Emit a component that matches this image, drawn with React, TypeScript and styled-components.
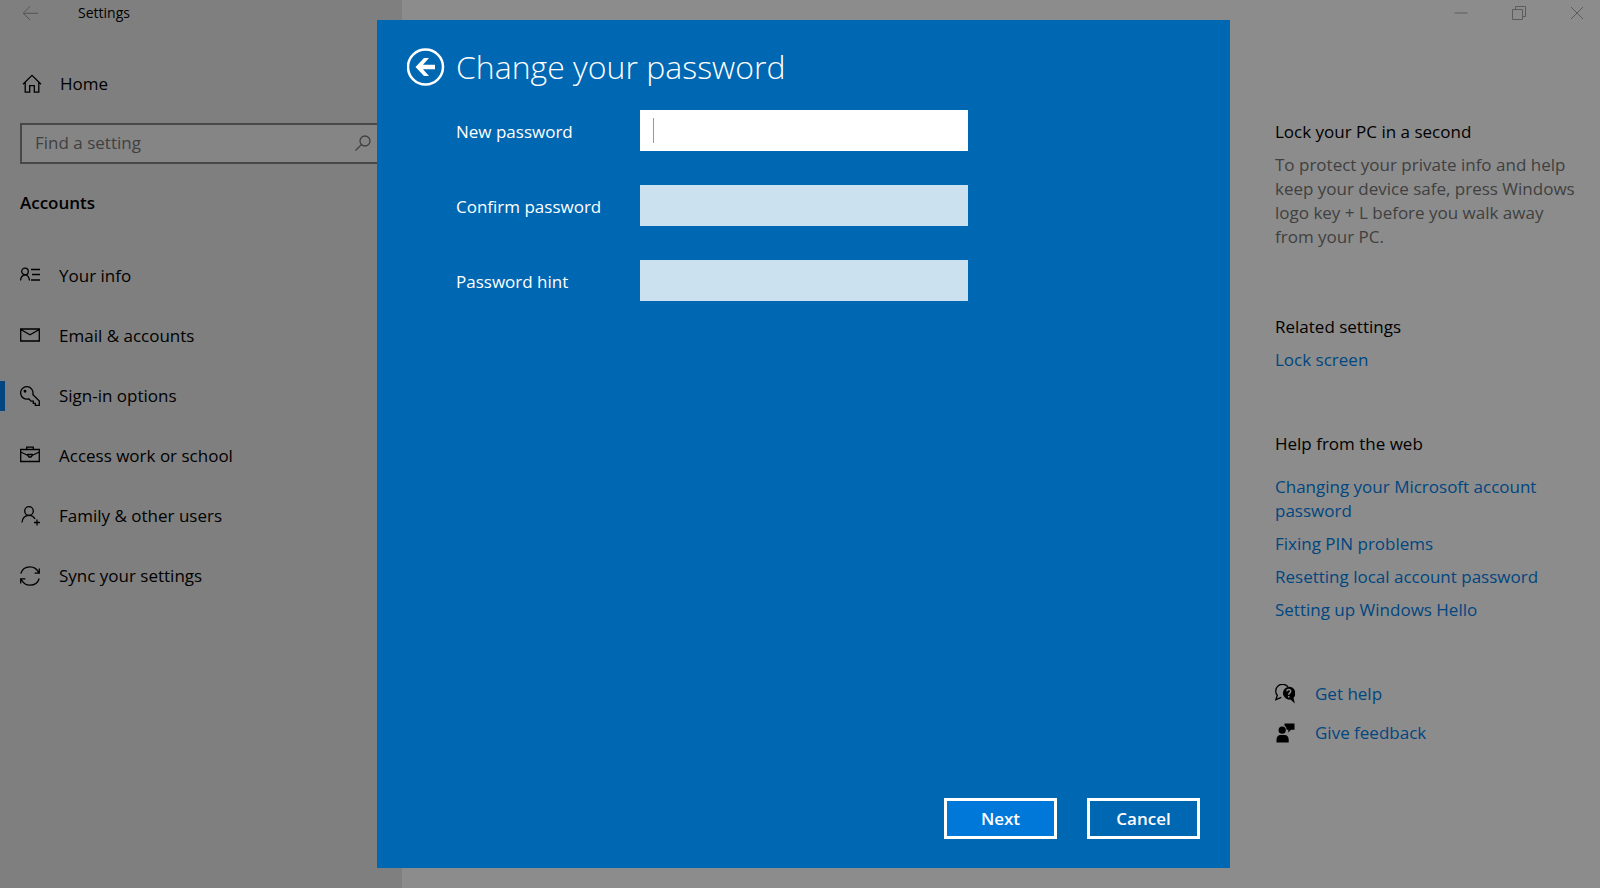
import React from "react";
import styled, { createGlobalStyle } from "styled-components";

const GlobalStyle = createGlobalStyle`
  *, *::before, *::after { box-sizing: border-box; }
  body {
    margin: 0;
    background: #8c8c8c;
    color: #000;
    font-family: "Open Sans", "Noto Sans", sans-serif;
    font-size: 17px;
    line-height: 24px;
  }
  button, input { font: inherit; color: inherit; }
  h1, h2, p, ul { margin: 0; padding: 0; font-weight: 400; }
  ul { list-style: none; }
`;

const Window = styled.div`
  display: flex;
  min-height: 100vh;
`;

const Sidebar = styled.aside`
  flex: 0 0 402px;
  background: #7f7f7f;
`;

const SidebarBar = styled.header`
  display: flex;
  align-items: center;
  gap: 39px;
  height: 26px;
  padding-left: 22px;
  font-size: 14px;
`;

const PlainButton = styled.button`
  display: flex;
  align-items: center;
  justify-content: center;
  padding: 0;
  border: 0;
  background: none;
`;

const Icon = styled.svg<{ $size?: number; $stroke?: number }>`
  flex: none;
  display: block;
  width: ${(p) => p.$size ?? 20}px;
  height: ${(p) => p.$size ?? 20}px;
  fill: none;
  stroke: currentColor;
  stroke-width: ${(p) => p.$stroke ?? 1.3};
`;

const BackButton = styled(PlainButton)`
  color: #565656;
`;

const HomeLink = styled.a`
  display: flex;
  align-items: center;
  gap: 18px;
  height: 40px;
  margin-top: 38px;
  padding-left: 22px;
  color: #000;
  text-decoration: none;
`;

const SearchBox = styled.label`
  display: flex;
  align-items: center;
  height: 41px;
  margin: 19px 20px 27px;
  padding: 0 9px 2px 13px;
  border: 2px solid #484848;
  background: #858585;
  color: #404040;
`;

const SearchInput = styled.input`
  flex: 1;
  min-width: 0;
  height: 24px;
  padding: 0;
  border: 0;
  outline: 0;
  background: none;
  &::placeholder { color: #404040; opacity: 1; }
`;

const SectionName = styled.h2`
  padding-left: 20px;
  font-size: 17px;
  font-weight: 600;
`;

const Nav = styled.nav`
  margin-top: 31px;
`;

const NavLink = styled.a<{ $active?: boolean }>`
  display: flex;
  align-items: center;
  height: 60px;
  color: #000;
  text-decoration: none;
  &::before {
    content: "";
    width: 5px;
    height: 30px;
    background: ${(p) => (p.$active ? "#004680" : "transparent")};
  }
  & > svg { margin: 0 19px 0 15px; }
`;

const Main = styled.main`
  flex: 1;
  min-width: 0;
`;

const WindowControls = styled.div`
  display: flex;
  justify-content: flex-end;
  gap: 12px;
  height: 26px;
  color: #5c5c5c;
  & > button { width: 46px; }
`;

const Aside = styled.aside`
  width: 325px;
  margin: 94px 0 0 auto;
  padding-right: 18px;
`;

const Block = styled.section<{ $gap?: number }>`
  display: flex;
  flex-direction: column;
  align-items: flex-start;
  gap: ${(p) => p.$gap ?? 9}px;
  margin-bottom: 60px;
`;

const BlockTitle = styled.h2`
  font-size: 17px;
`;

const Hint = styled.p`
  margin-bottom: 6px;
  color: #404040;
`;

const LinkList = styled.ul`
  display: flex;
  flex-direction: column;
  gap: 9px;
`;

const TextLink = styled.a`
  color: #004680;
  text-decoration: none;
`;

const SupportLink = styled(TextLink)`
  display: flex;
  align-items: center;
  gap: 20px;
  & > svg { color: #000; }
`;

const Overlay = styled.div`
  position: fixed;
  inset: 0;
  display: flex;
  justify-content: center;
  padding: 20px 0 20px 7px;
`;

const Dialog = styled.form`
  display: flex;
  flex-direction: column;
  width: 853px;
  max-width: 100%;
  padding: 25px 30px 29px;
  background: #0067b3;
  color: #fff;
  overflow: auto;
`;

const DialogHeader = styled.header`
  display: flex;
  align-items: center;
  gap: 11px;
  height: 44px;
`;

const DialogTitle = styled.h1`
  font-size: 32px;
  font-weight: 350;
  line-height: 44px;
`;

const Fields = styled.div`
  display: flex;
  flex-direction: column;
  gap: 34px;
  flex: 1;
  padding: 21px 0 0 49px;
`;

const Field = styled.div`
  display: flex;
  align-items: center;
  height: 41px;
`;

const FieldLabel = styled.label`
  flex: 0 0 184px;
  padding-top: 2px;
`;

const FieldInput = styled.input`
  width: 328px;
  height: 41px;
  padding: 0 13px;
  border: 0;
  border-radius: 0;
  outline: 0;
  background: #cce1ef;
  color: #000;
`;

const ActiveInput = styled(FieldInput)`
  background: #fff;
  &:placeholder-shown {
    caret-color: transparent;
    background: linear-gradient(#999, #999) 13px 8px / 1px 25px no-repeat #fff;
  }
`;

const Actions = styled.footer`
  display: flex;
  justify-content: flex-end;
  gap: 30px;
`;

const ActionButton = styled.button<{ $primary?: boolean }>`
  width: 113px;
  height: 41px;
  padding: 0;
  border: 3px solid #fff;
  background: ${(p) => (p.$primary ? "#0078d9" : "transparent")};
  color: #fff;
  font-weight: 600;
`;

const icons = {
  info: (
    <Icon viewBox="0 0 20 20">
      <circle cx="5" cy="5.5" r="3.3" />
      <path d="M.5 14.500c.3-3 2-5.400 4.500-5.700s4.200 2.700 4.500 5.700M11 3.500h9M12 8.500h8M11 14h9" />
    </Icon>
  ),
  mail: (
    <Icon viewBox="0 0 20 20">
      <path d="M.7 3h18.600v12H.7zM.7 3.500L10 8.800l9.300-5.300" />
    </Icon>
  ),
  key: (
    <Icon viewBox="0 0 20 20">
      <path d="M8.700 12.800A6.200 6.200 0 1 1 12.800 8.500L19.300 15v4.300h-4v-2h-2v-2.200h-2.200z" />
      <circle cx="5" cy="5.200" r=".8" fill="currentColor" />
    </Icon>
  ),
  work: (
    <Icon viewBox="0 0 20 20">
      <path d="M.7 3.500h18.600v12H.7zM6.700 3.500V1.200h6.600v2.300M.7 6l7.300 3.500M19.300 6L12 9.500M8 8.500h4v1.300l-1 1.200H9l-1-1.200z" />
    </Icon>
  ),
  family: (
    <Icon viewBox="0 0 20 20">
      <circle cx="9" cy="5" r="4.300" />
      <path d="M2 16.500c.4-4.200 3-7.200 7-7.200 2.800 0 4.800 1.400 6 3.700M17 13.500v6M14 16.500h6" />
    </Icon>
  ),
  sync: (
    <Icon viewBox="0 0 20 20">
      <path d="M.8 7.500C2 3.500 5.600.8 10 .8c4 0 7 2 8.800 6M19.300 2.500v4.700h-4.700M19.200 12.500c-1.200 4-4.800 6.700-9.200 6.700-4 0-7-2-8.800-6M.7 17.500v-4.700h4.700" />
    </Icon>
  ),
};

const navItems = [
  { label: "Your info", icon: icons.info },
  { label: "Email & accounts", icon: icons.mail },
  { label: "Sign-in options", icon: icons.key, active: true },
  { label: "Access work or school", icon: icons.work },
  { label: "Family & other users", icon: icons.family },
  { label: "Sync your settings", icon: icons.sync },
];

const webLinks = [
  "Changing your Microsoft account password",
  "Fixing PIN problems",
  "Resetting local account password",
  "Setting up Windows Hello",
];

export default function App() {
  return (
    <>
      <GlobalStyle />
      <Window>
        <Sidebar>
          <SidebarBar>
            <BackButton type="button" aria-label="Back">
              <Icon viewBox="0 0 17 17" $size={17} $stroke={1}>
                <path d="M8 1.500L1.200 8.300 8 15M1.200 8.300H16" />
              </Icon>
            </BackButton>
            <span>Settings</span>
          </SidebarBar>
          <HomeLink href="#home">
            <Icon viewBox="0 0 20 20">
              <path d="M1 10.200L10 1.300l9 8.900M3.200 8.200v10h4.500v-6.500h4.600v6.500h4.500v-10" />
            </Icon>
            Home
          </HomeLink>
          <SearchBox>
            <SearchInput type="search" placeholder="Find a setting" aria-label="Find a setting" />
            <Icon viewBox="0 0 16 16" $size={16}>
              <circle cx="10" cy="6" r="5" />
              <path d="M6.500 9.500L.5 15.500" />
            </Icon>
          </SearchBox>
          <SectionName>Accounts</SectionName>
          <Nav>
            {navItems.map((item) => (
              <NavLink key={item.label} href="#" $active={item.active}>
                {item.icon}
                {item.label}
              </NavLink>
            ))}
          </Nav>
        </Sidebar>
        <Main>
          <WindowControls>
            <PlainButton type="button" aria-label="Minimize">
              <Icon viewBox="0 0 14 14" $size={14} $stroke={1}><path d="M.5 7h13" /></Icon>
            </PlainButton>
            <PlainButton type="button" aria-label="Restore">
              <Icon viewBox="0 0 14 14" $size={14} $stroke={1}><path d="M.5 3.500h10v10H.5zM3.500 3.500v-3h10v10h-3" /></Icon>
            </PlainButton>
            <PlainButton type="button" aria-label="Close">
              <Icon viewBox="0 0 14 14" $size={14} $stroke={1}><path d="M1 1l12 12M13 1L1 13" /></Icon>
            </PlainButton>
          </WindowControls>
          <Aside>
            <Block>
              <BlockTitle>Lock your PC in a second</BlockTitle>
              <Hint>
                To protect your private info and help keep your device safe, press Windows logo key +
                L before you walk away from your PC.
              </Hint>
            </Block>
            <Block>
              <BlockTitle>Related settings</BlockTitle>
              <TextLink href="#lock">Lock screen</TextLink>
            </Block>
            <Block $gap={19}>
              <BlockTitle>Help from the web</BlockTitle>
              <LinkList>
                {webLinks.map((text) => (
                  <li key={text}><TextLink href="#help">{text}</TextLink></li>
                ))}
              </LinkList>
            </Block>
            <Block $gap={15}>
              <SupportLink href="#get-help">
                <Icon viewBox="0 0 20 20">
                  <path d="M6.300 13.300L.8 15.700l1.500-4.200A6.200 6.200 0 1 1 13 2.800" />
                  <path d="M14 2.700a6.500 6.500 0 1 0 1.500 12.900l4.300 3.900-1.300-5.700A6.500 6.500 0 0 0 14 2.700z" fill="currentColor" stroke="none" />
                  <path d="M11.800 7.200c.2-2.400 4.200-2.200 3.900.2-.2 1.500-2 1.500-2 3.300M13.700 11.900v1.600" stroke="#8c8c8c" strokeWidth="1.500" />
                </Icon>
                Get help
              </SupportLink>
              <SupportLink href="#feedback">
                <Icon viewBox="0 0 20 20">
                  <path d="M9.500.5h10v6.200h-3.500l-2.700 2.800V6.700h-1.600A5 5 0 0 0 9.500 2.600zM1.500 19.500v-3c0-2.500 1.600-4.500 4.100-4.500h4c2.500 0 4.100 2 4.100 4.500v3z" fill="currentColor" stroke="none" />
                  <circle cx="7.200" cy="7.200" r="3.600" fill="currentColor" stroke="none" />
                </Icon>
                Give feedback
              </SupportLink>
            </Block>
          </Aside>
        </Main>
      </Window>
      <Overlay>
        <Dialog role="dialog" aria-labelledby="dialog-title" onSubmit={(e) => e.preventDefault()}>
          <DialogHeader>
            <PlainButton type="button" aria-label="Go back">
              <Icon viewBox="0 0 38 38" $size={38} $stroke={2.5}>
                <circle cx="18.500" cy="19" r="17.500" />
                <path d="M8.500 19l8.500-9h5l-6 6.800h12v4.400H16l6 6.800h-5z" fill="currentColor" stroke="none" />
              </Icon>
            </PlainButton>
            <DialogTitle id="dialog-title">Change your password</DialogTitle>
          </DialogHeader>
          <Fields>
            <Field>
              <FieldLabel htmlFor="new-password">New password</FieldLabel>
              <ActiveInput id="new-password" type="password" placeholder=" " />
            </Field>
            <Field>
              <FieldLabel htmlFor="confirm-password">Confirm password</FieldLabel>
              <FieldInput id="confirm-password" type="password" />
            </Field>
            <Field>
              <FieldLabel htmlFor="password-hint">Password hint</FieldLabel>
              <FieldInput id="password-hint" type="text" />
            </Field>
          </Fields>
          <Actions>
            <ActionButton type="submit" $primary>Next</ActionButton>
            <ActionButton type="button">Cancel</ActionButton>
          </Actions>
        </Dialog>
      </Overlay>
    </>
  );
}
